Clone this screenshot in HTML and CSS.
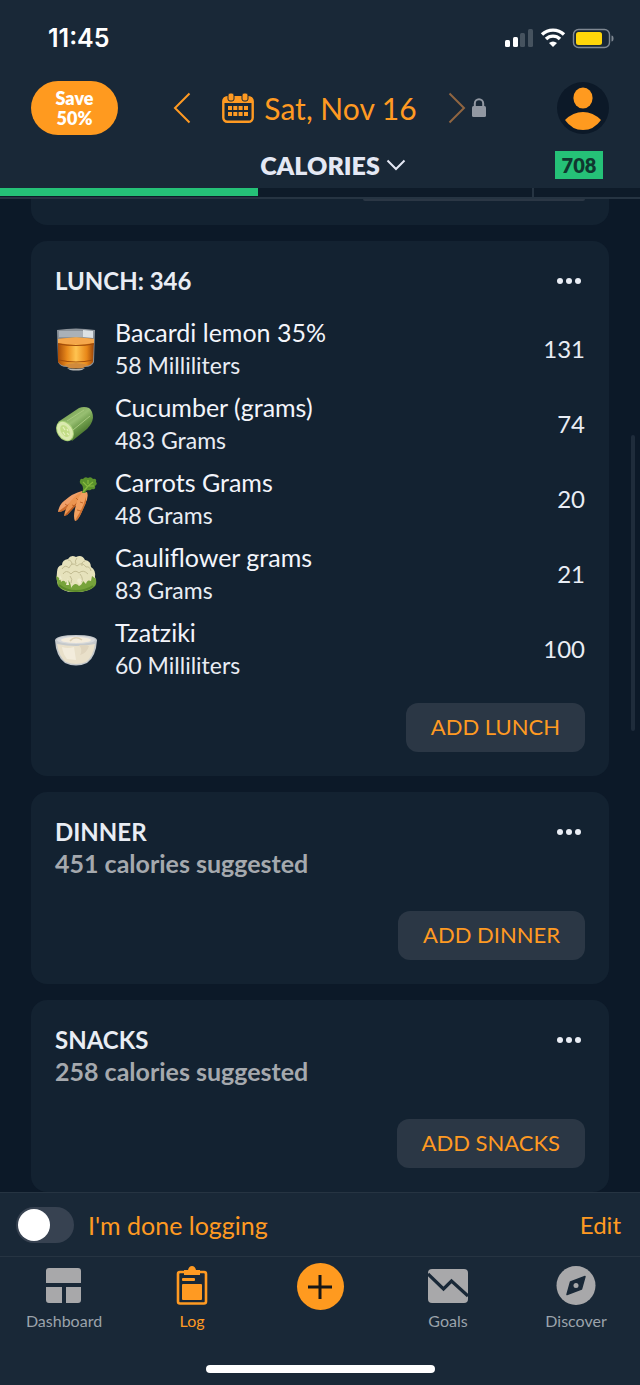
FILE: index.html
```html
<!DOCTYPE html>
<html lang="en">
  <head>
    <meta charset="UTF-8" />
    <meta name="viewport" content="width=device-width, initial-scale=1.0" />
    <title>Food Log</title>
    <link rel="stylesheet" href="styles.css">
  </head>
  <body>
    <header class="header">
      <div class="status">
        <span class="clock">11:45</span>
        <svg width="110" height="24" viewBox="0 0 110 24">
          <rect x="1" y="14" width="5" height="7" rx="1.5" fill="#fff" />
          <rect x="9" y="11" width="5" height="10" rx="1.5" fill="#fff" />
          <rect x="16" y="7" width="5" height="14" rx="1.5" fill="#46535f" />
          <rect x="24" y="3" width="5" height="18" rx="1.5" fill="#46535f" />
          <g fill="none" stroke="#fff" stroke-width="3.4">
            <path d="M38 8.5a16 16 0 0 1 22 0" />
            <path d="M42 13a10 10 0 0 1 14 0" />
          </g>
          <path d="M45 17a6 6 0 0 1 8 0l-4 4z" fill="#fff" />
          <rect x="69.500" y="3.500" width="36" height="18" rx="5" fill="none" stroke="#7f8892" stroke-width="1.400" />
          <rect x="72" y="6" width="26" height="13" rx="2.500" fill="#ffd60a" />
          <path d="M107.500 9.500q2 0 2 3t-2 3z" fill="#7f8892" />
        </svg>
      </div>

      <div class="topbar">
        <button class="save">Save<br>50%</button>
        <div class="day">
          <button class="arrow" aria-label="Previous day">
            <svg width="18" height="32" viewBox="0 0 18 32"><path d="M16.500 1.500L2 16l14.500 14.500" /></svg>
          </button>
          <button class="date">
            <svg width="32" height="30" viewBox="0 0 32 30" fill="#ff9a22">
              <rect x="1.300" y="4.300" width="29.400" height="24.400" rx="4" fill="none" stroke="#ff9a22" stroke-width="2.400" />
              <path d="M2 4h28v6H2z" />
              <rect x="6" y="0" width="6" height="8" rx="2" stroke="#192837" stroke-width="1" />
              <rect x="20" y="0" width="6" height="8" rx="2" stroke="#192837" stroke-width="1" />
              <path d="M6 13h4v4H6zM11.300 13h4v4h-4zM16.600 13h4v4h-4zM22 13h4v4h-4zM6 19h4v4H6zM11.300 19h4v4h-4zM16.600 19h4v4h-4zM22 19h4v4h-4z" />
            </svg>
            Sat, Nov 16
          </button>
          <button class="arrow next" aria-label="Next day">
            <svg width="18" height="32" viewBox="0 0 18 32"><path d="M1.500 1.500L16 16 1.500 30.500" /></svg>
          </button>
          <svg width="14" height="20" viewBox="0 0 14 20">
            <path d="M2.800 9V5.500a4.200 4.200 0 0 1 8.400 0V9" fill="none" stroke="#9298a2" stroke-width="2" />
            <rect x="0" y="8" width="14" height="11" rx="1.500" fill="#9298a2" />
          </svg>
        </div>
        <button class="avatar" aria-label="Profile">
          <svg width="52" height="52" viewBox="0 0 52 52" fill="#ff9a1f">
            <ellipse cx="26" cy="16" rx="9.600" ry="10.500" />
            <path d="M8 38q8-8 18-8t18 8q-7 10-18 10T8 38z" />
          </svg>
        </button>
      </div>

      <div class="metric">
        <button class="metric_name">
          CALORIES
          <svg width="20" height="12" viewBox="0 0 20 12"><path d="M1.500 1.500L10 10l8.500-8.500" /></svg>
        </button>
        <span class="left">708</span>
      </div>
      <div class="progress">
        <div class="progress_fill" style="width: 40.3%"></div>
        <div class="progress_mark" style="left: 83.1%"></div>
      </div>
    </header>

    <main class="log">
      <section class="card previous">
        <div class="previous_button"></div>
      </section>

      <section class="card">
        <div class="card_top">
          <h2>LUNCH: 346</h2>
          <button class="more" aria-label="Lunch options"><i></i><i></i><i></i></button>
        </div>
        <ul class="foods">
          <li>
            <svg width="42" height="44" viewBox="0 0 42 44">
              <defs>
                <linearGradient id="rum">
                  <stop offset="0" stop-color="#a64c08" />
                  <stop offset="0.25" stop-color="#e98a1b" />
                  <stop offset="0.5" stop-color="#ffc451" />
                  <stop offset="0.8" stop-color="#e88718" />
                  <stop offset="1" stop-color="#9b4508" />
                </linearGradient>
              </defs>
              <path d="M2 3q19-3 38 0l-1 32q-2 5-9 5-9 2-18 0-7 0-9-5z" fill="#8b9299" />
              <path d="M4 4h24v6H4z" fill="#aab1b8" />
              <path d="M28 3l10 1v7l-10-1z" fill="#dce1e4" />
              <path d="M3 12q18-3 36 0l-1 23q-3 4-8 4H11q-5 0-8-4z" fill="url(#rum)" />
              <path d="M3 12q18-3 36 0v4q-18 3-36 0z" fill="#f5a74c" />
              <path d="M3 17q18 3 36 0M4 33q17 4 34 0" fill="none" stroke="#a14d0b" stroke-width="1.200" />
              <path d="M9 38q12-4 24 0l-5 3q-7 1-14 0z" fill="#d08a3c" />
              <path d="M12 41q9 2 18 0l-3 2q-6 1-12 0z" fill="#b5b6b3" />
            </svg>
            <div class="food">
              <p class="name">Bacardi lemon 35%</p>
              <p class="amount">58 Milliliters</p>
            </div>
            <span class="kcal">131</span>
          </li>
          <li>
            <svg width="42" height="44" viewBox="0 0 42 44">
              <defs>
                <linearGradient id="peel" x1="0.3" y1="0.2" x2="0.75" y2="0.8">
                  <stop offset="0" stop-color="#7fa95a" />
                  <stop offset="0.35" stop-color="#98bf72" />
                  <stop offset="0.65" stop-color="#6c9a49" />
                  <stop offset="1" stop-color="#47722c" />
                </linearGradient>
              </defs>
              <path d="M3 20L24 6q5-2 10 0 4 3 4 10-1 6-6 11L17 39z" fill="url(#peel)" />
              <path d="M12 19L29 8M18 28L35 14" stroke="#a9ca80" stroke-width="1" />
              <ellipse cx="10" cy="29" rx="8" ry="11" transform="rotate(-32 10 29)" fill="#a8cf76" />
              <ellipse cx="10" cy="29" rx="7" ry="10" transform="rotate(-32 10 29)" fill="#daeaae" />
              <ellipse cx="10" cy="29" rx="4" ry="6.500" transform="rotate(-32 10 29)" fill="#c2dd86" />
              <path d="M8 25l2 3M12 31l2 2M8 30l2 3M12 27l1 2" stroke="#e6f0bd" stroke-width="1.200" />
            </svg>
            <div class="food">
              <p class="name">Cucumber (grams)</p>
              <p class="amount">483 Grams</p>
            </div>
            <span class="kcal">74</span>
          </li>
          <li>
            <svg width="42" height="44" viewBox="0 0 42 44">
              <path d="M27 14q2 3-1 6L9 33q-3 2-6 2 1-7 6-11 9-8 18-10z" fill="#ef9f68" />
              <path d="M27 17L4 34l-1 1q4 0 7-2l16-12z" fill="#c96a2c" />
              <path d="M29 14q2 4-2 8L14 36q-2 3-5 3 1-7 6-14 7-9 14-11z" fill="#eb944f" />
              <path d="M27 20L10 38l-1 1q3 0 5-3l13-14z" fill="#b95a20" />
              <path d="M32 15q2 5-2 12-3 8-6 13-2 4-4 4-2-4 0-12 2-11 7-16z" fill="#f2a05f" />
              <path d="M31 20q-3 11-9 20l-2 4q3-1 5-5l6-13z" fill="#cf7130" />
              <path d="M10 27l3 2M17 28l3 1M22 33l4 1M21 21l2 2M25 25l3 1" stroke="#b95b20" stroke-width="0.800" />
              <path d="M27 16q2-5 0-8-3-2-2-4 0-3 3-2 2-3 5-1 3-2 5 1 4-1 3 3 2 2-1 4 1 4-3 3-2 2-4 1-2 0-3 3z" fill="#5a912c" />
              <path d="M28 15l5-6 5-4M32 9l-4-4M33 9h6M33 7V3" fill="none" stroke="#87ba3f" stroke-width="1.200" />
            </svg>
            <div class="food">
              <p class="name">Carrots Grams</p>
              <p class="amount">48 Grams</p>
            </div>
            <span class="kcal">20</span>
          </li>
          <li>
            <svg width="42" height="44" viewBox="0 0 42 44">
              <path d="M2 20q0-6 5-7 0-5 6-6 3-5 8-2 6-3 9 3 6 1 6 7 5 3 4 10 2 5-1 9-6 6-18 6-13 1-18-7-2-5-1-13z" fill="#e6e2bc" />
              <g fill="none" stroke="#c3bd93" stroke-width="1">
                <path d="M7 17q3-5 7-1 3-7 8-2 5-5 9 1 4-1 5 4M8 22q3-5 8 0 4-5 8-1 4-4 9 1M13 8q4 0 4 5M22 6q-3 3-1 6M30 9q-4 1-3 5M15 24q3 3 1 7M25 22q4 5 1 8" />
              </g>
              <path d="M1 24q5 2 5 6 3-3 5 1l2-3q3 3 3 8 4-7 8-2 3-1 4-5l3 3q1-5 5-3l1-5 4 3q1 6-2 8-5 5-18 5-13 0-18-6z" fill="#77a33b" />
              <path d="M4 33q7 6 17 6t17-5" fill="none" stroke="#5d8b2b" stroke-width="2" />
              <path d="M22 29q1-5 5-1l-2 5zM11 33l2-7 1 7zM4 28l1-5 2 4z" fill="#efeccd" />
            </svg>
            <div class="food">
              <p class="name">Cauliflower grams</p>
              <p class="amount">83 Grams</p>
            </div>
            <span class="kcal">21</span>
          </li>
          <li>
            <svg width="42" height="44" viewBox="0 0 42 44">
              <path d="M0 13q2-5 21-5t21 5q-1 17-10 23-11 5-22 0Q1 30 0 13z" fill="#c5c9cb" />
              <path d="M2 17q19 4 38 0-2 13-9 18-10 4-20 0Q4 30 2 17z" fill="#e9e0ca" />
              <path d="M7 20q6 2 12 0l2 13-9-1q-4-5-5-12z" fill="#f3ecdc" />
              <path d="M24 18q8 0 10 1-2 7-9 9 3-5-1-10z" fill="#dfd4bd" />
              <ellipse cx="21" cy="13" rx="19" ry="4" fill="#d9dadb" />
              <ellipse cx="21" cy="13" rx="15" ry="3" fill="#f4ecdc" />
              <path d="M15 14q5-6 12-1" fill="none" stroke="#ddd0b3" stroke-width="1.500" />
            </svg>
            <div class="food">
              <p class="name">Tzatziki</p>
              <p class="amount">60 Milliliters</p>
            </div>
            <span class="kcal">100</span>
          </li>
        </ul>
        <button class="add">ADD LUNCH</button>
      </section>

      <section class="card">
        <div class="card_top">
          <h2>DINNER</h2>
          <button class="more" aria-label="Dinner options"><i></i><i></i><i></i></button>
        </div>
        <p class="suggested">451 calories suggested</p>
        <button class="add">ADD DINNER</button>
      </section>

      <section class="card">
        <div class="card_top">
          <h2>SNACKS</h2>
          <button class="more" aria-label="Snack options"><i></i><i></i><i></i></button>
        </div>
        <p class="suggested">258 calories suggested</p>
        <button class="add">ADD SNACKS</button>
      </section>
      <div class="scrollbar"></div>
    </main>

    <footer class="footer">
      <div class="done">
        <input type="checkbox" id="done">
        <label for="done">I'm done logging</label>
        <button class="edit">Edit</button>
      </div>
      <nav class="tabs">
        <a href="#dashboard">
          <svg width="40" height="40" viewBox="0 0 40 40" fill="#a8a8aa">
            <path d="M2 6q0-3 3-3h29q3 0 3 3v12H2zM2 22h16v16H5q-3 0-3-3zM22 22h15v13q0 3-3 3H22z" />
          </svg>
          Dashboard
        </a>
        <a href="#log" class="active">
          <svg width="40" height="40" viewBox="0 0 40 40" fill="#ff9a22">
            <rect x="6" y="7" width="28" height="31.500" rx="2" fill="none" stroke="#ff9a22" stroke-width="2.600" />
            <path d="M12 5h4q1-4 4-4t4 4h4v5H12z" />
            <rect x="10" y="13" width="13" height="3" rx="1" />
            <rect x="10" y="19" width="20" height="16" rx="1" />
          </svg>
          Log
        </a>
        <button class="plus" aria-label="Add food">
          <svg width="24" height="24" viewBox="0 0 24 24"><path d="M12 0v24M0 12h24" stroke="#171717" stroke-width="3" /></svg>
        </button>
        <a href="#goals">
          <svg width="40" height="40" viewBox="0 0 40 40">
            <rect x="0" y="4" width="40" height="34" rx="4" fill="#a8a8aa" />
            <path d="M0 9l15.500 15 8-8L40 31" fill="none" stroke="#192837" stroke-width="3.200" />
          </svg>
          Goals
        </a>
        <a href="#discover">
          <svg width="40" height="40" viewBox="0 0 40 40">
            <circle cx="20" cy="20.500" r="19.500" fill="#a8a8aa" />
            <path d="M29 11.500L25.500 24 11 29.500 14.500 17z" fill="#192837" stroke="#192837" stroke-width="1.500" stroke-linejoin="round" />
            <circle cx="20" cy="20.500" r="2.500" fill="#a8a8aa" />
          </svg>
          Discover
        </a>
      </nav>
      <div class="home"></div>
    </footer>
  </body>
</html>
```
FILE: styles.css
```css
* {
  box-sizing: border-box;
}
body {
  margin: 0;
  min-height: 100vh;
  display: flex;
  flex-direction: column;
  font-family: Lato, sans-serif;
  color: #e9edf4;
  background: #0c1928;
}
h2,
p,
ul {
  margin: 0;
  padding: 0;
}
button {
  border: none;
  padding: 0;
  background: none;
  font-family: inherit;
  color: #ff9a22;
  cursor: pointer;
}
svg {
  display: block;
  flex: none;
}
.header {
  background: #192837;
  border-bottom: 2px solid #263442;
}
.status {
  height: 76px;
  padding: 0 26px 0 48px;
  display: flex;
  align-items: center;
  justify-content: space-between;
}
.clock {
  font-family: Inter, sans-serif;
  font-size: 25px;
  font-weight: 600;
  color: white;
}
.topbar {
  height: 64px;
  padding: 0 31px;
  display: flex;
  align-items: center;
  justify-content: space-between;
}
.save {
  width: 87px;
  height: 54px;
  border-radius: 27px;
  background: #ff9a1f;
  color: white;
  font-size: 18px;
  font-weight: 800;
  line-height: 20px;
}
.day {
  margin-right: 16px;
  display: flex;
  align-items: center;
}
.arrow svg {
  fill: none;
  stroke: #ff9a22;
  stroke-width: 2;
}
.arrow.next {
  margin-right: 6px;
}
.arrow.next svg {
  stroke: #8f6541;
}
.date {
  display: flex;
  align-items: center;
  gap: 10px;
  margin: 0 31px;
  font-size: 30px;
  line-height: 32px;
}
.avatar {
  width: 52px;
  height: 52px;
  border-radius: 50%;
  background: #0c1928;
}
.metric {
  height: 48px;
  padding: 2px 37px 0;
  display: grid;
  grid-template-columns: 1fr auto 1fr;
  align-items: center;
}
.metric_name {
  grid-column: 2;
  display: flex;
  align-items: center;
  gap: 6px;
  padding-left: 26px;
  color: #e4e8f4;
  font-size: 25px;
  line-height: 28px;
  font-weight: 800;
}
.metric_name svg {
  fill: none;
  stroke: #e4e8f4;
  stroke-width: 2;
}
.left {
  justify-self: end;
  width: 48px;
  line-height: 28px;
  text-align: center;
  font-size: 20px;
  font-weight: 800;
  color: #10362f;
  background: #25c177;
}
.progress {
  position: relative;
  height: 9px;
  background: #0e1b29;
}
.progress_fill {
  height: 8px;
  background: #25c177;
}
.progress_mark {
  position: absolute;
  top: 0;
  width: 2px;
  height: 9px;
  background: #263442;
}
.log {
  flex: 1;
  position: relative;
  padding: 0 31px;
  display: flex;
  flex-direction: column;
  gap: 16px;
}
.card {
  padding: 24px;
  border-radius: 16px;
  background: #132231;
  display: flex;
  flex-direction: column;
}
.previous {
  height: 26px;
  padding: 0 24px;
  border-radius: 0 0 16px 16px;
}
.previous_button {
  align-self: flex-end;
  width: 222px;
  height: 2px;
  border-radius: 0 0 12px 12px;
  background: #2b3745;
}
.card_top {
  display: flex;
  align-items: center;
  justify-content: space-between;
}
h2 {
  font-size: 24px;
  line-height: 32px;
  font-weight: 700;
}
.more {
  display: flex;
  gap: 3px;
  padding: 8px 4px;
}
.more i {
  width: 6px;
  height: 6px;
  border-radius: 50%;
  background: #e9edf4;
}
.foods {
  list-style: none;
  margin-top: 14px;
}
.foods li {
  height: 75px;
  display: flex;
  align-items: center;
}
.food {
  flex: 1;
  margin-left: 18px;
}
.name {
  font-size: 25px;
  line-height: 33px;
  color: #f3f5fb;
}
.amount {
  font-size: 23px;
  line-height: 33px;
}
.kcal {
  font-size: 24px;
}
.suggested {
  font-size: 25px;
  line-height: 31px;
  font-weight: 700;
  color: #a5a9ae;
}
.add {
  align-self: flex-end;
  height: 49px;
  margin-top: 32px;
  padding: 0 25px 2px;
  border-radius: 12px;
  background: #2b3745;
  font-size: 22px;
}
.foods + .add {
  margin-top: 17px;
}
.scrollbar {
  position: absolute;
  top: 236px;
  right: 5px;
  width: 4px;
  height: 296px;
  border-radius: 2px;
  background: #1f2c3b;
}
.footer {
  background: #192837;
  border-top: 1px solid #263442;
}
.done {
  height: 63px;
  padding: 0 19px 0 16px;
  display: flex;
  align-items: center;
  font-size: 25px;
  line-height: 30px;
  color: #ff9a22;
}
.done input {
  appearance: none;
  width: 58px;
  height: 36px;
  margin: 0 14px 0 0;
  padding: 2px;
  border-radius: 18px;
  background: #374251;
}
.done input::before {
  content: "";
  display: block;
  width: 32px;
  height: 32px;
  border-radius: 50%;
  background: white;
}
.done input:checked::before {
  margin-left: 22px;
}
.done label {
  flex: 1;
}
.edit {
  font-size: 24px;
}
.tabs {
  height: 109px;
  border-top: 1px solid #263442;
  display: grid;
  grid-template-columns: repeat(5, 1fr);
  align-items: start;
  justify-items: center;
}
.tabs a {
  padding-top: 8px;
  display: flex;
  flex-direction: column;
  align-items: center;
  gap: 6px;
  font-size: 16px;
  line-height: 20px;
  color: #9ba3ab;
  text-decoration: none;
}
.tabs .active {
  color: #ff9a22;
}
.plus {
  width: 47px;
  height: 47px;
  margin-top: 6px;
  border-radius: 50%;
  background: #ff9a1f;
  display: flex;
  align-items: center;
  justify-content: center;
}
.home {
  width: 229px;
  height: 8px;
  margin: 0 auto 12px;
  border-radius: 4px;
  background: white;
}
```
